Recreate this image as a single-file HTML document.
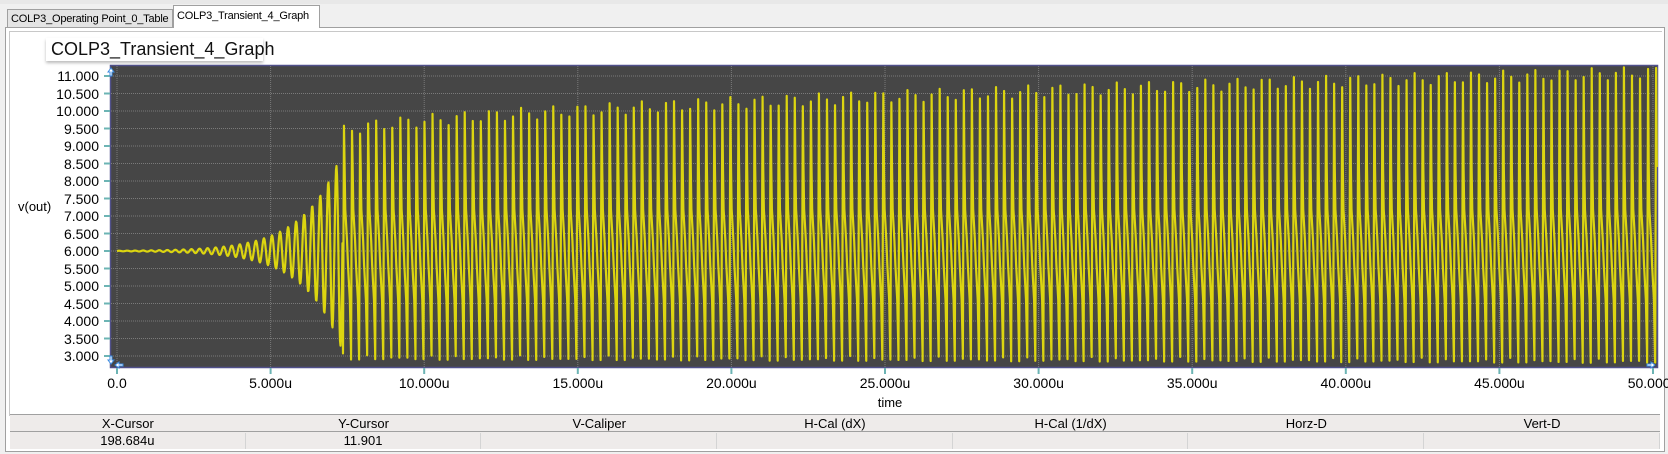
<!DOCTYPE html>
<html><head><style>
body{margin:0;width:1668px;height:454px;background:#f0f0f0;font-family:"Liberation Sans",sans-serif;position:relative;overflow:hidden}
.abs{position:absolute}
.tab{position:absolute;font-size:11px;border:1px solid #a0a0a0;border-bottom:none;padding:0 3px;box-sizing:border-box;white-space:nowrap;overflow:hidden;letter-spacing:-0.2px}
.lbl{position:absolute;font-size:14px;color:#000;white-space:nowrap}
.yl{right:1569px;text-align:right}
.xl{transform:translateX(-50%)}
.th{position:absolute;top:416px;height:15px;font-size:13px;text-align:center;line-height:15px}
.td{position:absolute;top:433px;height:16px;font-size:13px;text-align:center;line-height:16px;border-right:1px solid #d4d4d4;box-sizing:border-box}
</style></head><body>
<div class="abs" style="left:0;top:0;width:1668px;height:4px;background:#e8e8e8"></div>
<div class="tab" style="left:7px;top:9px;width:166px;height:19px;background:#e4e4e4;line-height:18px">COLP3_Operating Point_0_Table</div>
<div class="tab" style="left:173px;top:5px;width:147px;height:23px;background:#fff;line-height:20px;z-index:2">COLP3_Transient_4_Graph</div>
<div class="abs" style="left:5px;top:27px;width:1660px;height:425px;border:1px solid #a0a0a0;box-sizing:border-box;background:#fff"></div>
<div class="abs" style="left:9px;top:31px;width:1652px;height:384px;border-left:1px solid #c8c8c8;border-top:1px solid #c8c8c8;background:#fff"></div>
<div class="abs" style="left:46px;top:38px;width:217px;height:23px;box-shadow:0 2px 3px #bbb;background:#fff;font-size:18px;line-height:23px;padding-left:5px;box-sizing:border-box;color:#111">COLP3_Transient_4_Graph</div>
<svg class="abs" style="left:0;top:0" width="1668" height="454" id="g">
<rect x="110.5" y="65.5" width="1547" height="302" fill="#464646" stroke="#50508a" stroke-width="1.5"/>
<g id="grid" stroke="#7a7a7a" stroke-dasharray="1,1" stroke-width="1"></g>
<g id="ticks" stroke="#6cb4b4" stroke-width="2"></g>
<polyline id="w" fill="none" stroke="#dcd510" stroke-width="2.2" stroke-linejoin="round" points=""/>
<path d="M111 68 l-3 4 h2 v4 h2 v-4 h2z M111 364 l-3 -4 h2 v-4 h2 v4 h2z M115 365 l4 -3 v2 h4 v2 h-4 v2z M1655 365 l-4 -3 v2 h-4 v2 h4 v2z" fill="#fff" stroke="#3a8ae0" stroke-width="1"/>
</svg>
<div id="labels"></div>
<div class="lbl" style="left:18px;top:199px;font-size:13px">v(out)</div>
<div class="lbl xl" style="left:890px;top:395px;font-size:13px">time</div>
<div class="abs" style="left:10px;top:414px;width:1650px;height:1px;background:#a0a0a0"></div>
<div class="abs" style="left:10px;top:415px;width:1650px;height:16px;background:#eeebea"></div>
<div class="abs" style="left:10px;top:431px;width:1650px;height:1px;background:#a0a0a0"></div>
<div class="abs" style="left:10px;top:432px;width:1650px;height:17px;background:#eeebea"></div>
<div id="tbl"></div>
<script>
var x0=117,xs=30.72,yv=function(v){return 76+(11-v)*35;};
var grid='',ticks='',lab='';
for(var i=0;i<=10;i++){var x=x0+i*xs*5;grid+='<line x1="'+x+'" y1="66" x2="'+x+'" y2="367"/>';ticks+='<line x1="'+x+'" y1="368" x2="'+x+'" y2="374"/>';
lab+='<div class="lbl xl" style="left:'+x+'px;top:375px">'+(i==0?'0.0':(i*5).toFixed(3)+'u')+'</div>';}
for(var k=0;k<=16;k++){var v=11-k*0.5,y=yv(v);grid+='<line x1="111" y1="'+y+'" x2="1657" y2="'+y+'"/>';ticks+='<line x1="104" y1="'+y+'" x2="110" y2="'+y+'"/>';
lab+='<div class="lbl yl" style="top:'+(y-8)+'px">'+v.toFixed(3)+'</div>';}
document.getElementById('grid').innerHTML=grid;document.getElementById('ticks').innerHTML=ticks;
document.getElementById('labels').innerHTML=lab;
var pts=[],P=8.05;
function add(x,v){pts.push(x.toFixed(2)+','+yv(v).toFixed(2));}
for(var x=117;x<343;x+=0.5){var t=((x-117)%P)/P;var a=2.9*Math.exp((x-343)/38);add(x,6+a*Math.sin(2*Math.PI*t));}
var n=0;
for(var c=343;c<1657;c+=P){n++;var f=(c-343)/(1657-343);var pk=9.4+1.7*Math.pow(f,0.6)+0.18*Math.sin(n*1.7);var lo=3.0-0.1*f+0.1*Math.sin(n*2.3);
 var T=[[0,lo],[0.12,pk],[0.2,8.4],[0.28,7.2],[0.5,6.3],[0.62,5.6],[0.85,4.6],[1,lo]];
 for(var j=0;j<T.length;j++){var xx=c+T[j][0]*P;if(xx<=1657)add(xx,T[j][1]);}}
document.getElementById('w').setAttribute('points',pts.join(' '));
var h=['X-Cursor','Y-Cursor','V-Caliper','H-Cal (dX)','H-Cal (1/dX)','Horz-D','Vert-D'],d=['198.684u','11.901','','','','',''],s='',cw=235.7;
for(var i=0;i<7;i++){var l=10+i*cw;s+='<div class="th" style="left:'+l+'px;width:'+cw+'px">'+h[i]+'</div><div class="td" style="left:'+l+'px;width:'+cw+'px">'+d[i]+'</div>';}
document.getElementById('tbl').innerHTML=s;
</script>
</body></html>
